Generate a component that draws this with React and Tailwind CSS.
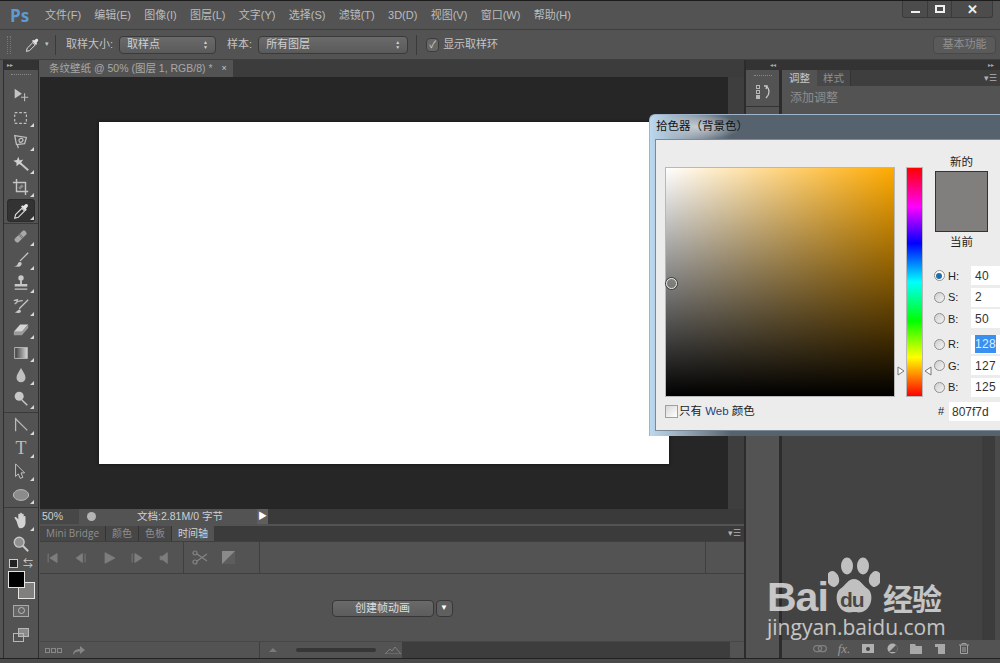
import { useState } from "react";

const cjk = "font-['Liberation_Sans','Noto_Sans_CJK_SC',sans-serif]";

const menus = ["文件(F)", "编辑(E)", "图像(I)", "图层(L)", "文字(Y)", "选择(S)", "滤镜(T)", "3D(D)", "视图(V)", "窗口(W)", "帮助(H)"];

const Svg = ({ children, size = 18 }) => (
	<svg width={size} height={size} viewBox="0 0 20 20" fill="none" stroke="none">
		{children}
	</svg>
);

const toolIcons = {
	move: (
		<>
			<path d="M3 3 L3 14 L11 8.5Z" fill="#c4c4c4" />
			<path d="M14 8v9M10 12.5h8" stroke="#bdbdbd" strokeWidth="1.2" />
		</>
	),
	marquee: <rect x="3" y="4" width="13" height="12" stroke="#c0c0c0" strokeWidth="1.3" strokeDasharray="3 2" />,
	lasso: (
		<>
			<path d="M3 4 L16 6 L14 13 L5 14Z" stroke="#c0c0c0" strokeWidth="1.4" />
			<path d="M8 8c3-2 6 0 3 3-2 1-4 0-3 -3M6 14l1 4" stroke="#c0c0c0" strokeWidth="1.4" />
		</>
	),
	wand: (
		<>
			<path d="M8 8l10 9" stroke="#c4c4c4" strokeWidth="2.2" />
			<path d="M7 2l1.5 4 4-1-2.5 3.5 2 3-4-1.5-3 2.5 0-4-3.5-2 4-1z" fill="#d0d0d0" />
		</>
	),
	crop: (
		<>
			<path d="M5 1v14h13M1 5h14v14" stroke="#c4c4c4" strokeWidth="1.6" />
			<path d="M8 12l4-4" stroke="#8a8a8a" strokeWidth="3" />
		</>
	),
	eyedropper: (
		<>
			<path d="M3 18l1-4 7-7 3 3-7 7z" stroke="#e0e0e0" strokeWidth="1.2" />
			<path d="M10 5l5 5 1.5-1.5-1-1 2-2.5c1-2-1-3.5-2.5-2.5l-2.5 2-1-1z" fill="#e4e4e4" />
		</>
	),
	heal: (
		<>
			<path d="M3 12L12 3c2-1 5 2 4 4l-9 9c-2 1-5-2-4-4z" fill="#a8a8a8" />
			<path d="M8 7l4 4" stroke="#6d6d6d" strokeWidth="3" strokeDasharray="1 1" />
		</>
	),
	brush: (
		<>
			<path d="M9 11L18 2" stroke="#c8c8c8" strokeWidth="1.4" />
			<path d="M2 17c3 0 4-1 4.500-3 .5-2 3-2.500 4-1 1 2-1 4.500-4 4.500z" fill="#c8c8c8" />
		</>
	),
	stamp: (
		<>
			<circle cx="10" cy="4.500" r="3" fill="#c8c8c8" />
			<path d="M9 7h2v4h-2z" fill="#c8c8c8" />
			<path d="M3 11h14v3H3zM3 16h14v1.500H3z" fill="#c8c8c8" />
		</>
	),
	history: (
		<>
			<path d="M3 17c3 0 3-3 6-3l1 2c-1 2-4 2-7 1z" fill="#c8c8c8" />
			<path d="M8 13L18 3" stroke="#c8c8c8" strokeWidth="1.4" />
			<path d="M3 8c2-3 6-4 9-4M2 4l4-1-1 4" stroke="#c0c0c0" strokeWidth="1.4" />
		</>
	),
	eraser: (
		<>
			<path d="M2 13L9 5h9l-7 8z" fill="#d4d4d4" />
			<path d="M2 13h9v4H2zM11 13l7-8v4l-7 8z" fill="#9b9b9b" />
		</>
	),
	gradient: (
		<>
			<defs>
				<linearGradient id="tg">
					<stop offset="0" stopColor="#3a3a3a" />
					<stop offset="1" stopColor="#d8d8d8" />
				</linearGradient>
			</defs>
			<rect x="3" y="4" width="14" height="12" fill="url(#tg)" stroke="#bdbdbd" />
		</>
	),
	drop: <path d="M10 1c2 4 5 7 5 11a5 5 0 0 1-10 0c0-4 3-7 5-11z" fill="#c0c0c0" />,
	dodge: (
		<>
			<circle cx="8" cy="7" r="5" fill="#c8c8c8" />
			<path d="M11 11l6 6" stroke="#c8c8c8" strokeWidth="1.6" />
		</>
	),
	pen: <path d="M4 2v15M4 3l13 13" stroke="#b8b8b8" strokeWidth="1.4" />,
	type: (
		<text x="10" y="17" textAnchor="middle" fontSize="20" fontFamily="Liberation Serif" fill="#bdbdbd">
			T
		</text>
	),
	select: <path d="M4 1l0 14 3-3 2 5 3-1-2-5 4 0z" fill="#4a4a4a" stroke="#c4c4c4" strokeWidth="1.1" />,
	ellipse: <ellipse cx="10" cy="10" rx="8.500" ry="6" fill="#8b8b8b" stroke="#c0c0c0" />,
	hand: (
		<path d="M5 10L3 7c-1-1 1-2 2-1l2 2V3c0-1.500 2-1.500 2 0v3-4c0-1.500 2-1.500 2 0v4-3c0-1.500 2-1.500 2 0v4-1.500c0-1.500 2-1.500 2 0V12c0 3-2 6-5 6H9c-2 0-3-5-4-8z" fill="#d2d2d2" />
	),
	zoom: (
		<>
			<circle cx="8" cy="8" r="5.500" fill="#8f8f8f" stroke="#c8c8c8" strokeWidth="1.500" />
			<path d="M12 12l6 6" stroke="#c8c8c8" strokeWidth="2.200" />
		</>
	),
};

const toolGroups = [
	["move", "marquee", "lasso", "wand", "crop", "eyedropper"],
	["heal", "brush", "stamp", "history", "eraser", "gradient", "drop", "dodge"],
	["pen", "type", "select", "ellipse"],
	["hand", "zoom"],
];

const Tool = ({ name }) => {
	const active = name === "eyedropper";
	const plain = name === "move" || name === "zoom";
	return (
		<div className={`relative flex h-[23.2px] w-[28px] items-center justify-center rounded-sm ${active ? "bg-[#333333] shadow-[inset_0_0_0_1px_#2b2b2b]" : ""}`}>
			<Svg>{toolIcons[name]}</Svg>
			{!plain && <span className="absolute bottom-[2px] right-[1px] h-0 w-0 border-b-[4px] border-l-[4px] border-b-[#d8d8d8] border-l-transparent" />}
		</div>
	);
};

const Toolbar = () => (
	<div className="flex h-full w-[36px] flex-col border-x border-[#2f2f2f] bg-[#535353]">
		<div className="flex h-[10px] items-center bg-[#333333] pl-[3px] text-[6px] leading-none text-[#b0b0b0]">▸▸</div>
		<div className="mx-auto mt-[4px] h-[2px] w-[20px] border-t border-dotted border-[#888888]" />
		<div className="flex flex-col items-center pt-[7px]">
			{toolGroups.map((group, i) => (
				<div key={i} className={`flex w-full flex-col items-center ${i > 0 ? "mt-[1px] border-t border-[#3a3a3a] pt-[1px]" : ""}`}>
					{group.map((t) => (
						<Tool key={t} name={t} />
					))}
				</div>
			))}
			<div className="mt-[3px] flex w-[28px] items-center justify-between px-[2px]">
				<div className="relative h-[9px] w-[9px] border border-[#cccccc] bg-[#222222]" />
				<span className="text-[10px] leading-none text-[#cfcfcf]">⇆</span>
			</div>
			<div className="relative mt-[2px] h-[28px] w-[27px]">
				<div className="absolute bottom-0 right-0 h-[17px] w-[17px] border border-[#e4e4e4] bg-[#807f7d]" />
				<div className="absolute left-0 top-0 h-[17px] w-[17px] border border-[#e4e4e4] bg-black" />
			</div>
			<div className="mt-[6px] flex h-[12px] w-[16px] items-center justify-center border border-[#aaaaaa] bg-[#666666]">
				<div className="h-[7px] w-[7px] rounded-full border border-[#bbbbbb]" />
			</div>
			<div className="relative mt-[11px] h-[14px] w-[16px]">
				<div className="absolute right-0 top-0 h-[9px] w-[11px] border border-[#b8b8b8] bg-[#8a8a8a]" />
				<div className="absolute bottom-0 left-0 h-[9px] w-[11px] border border-[#b8b8b8]" />
			</div>
		</div>
	</div>
);

const SelectBox = ({ label, width }) => (
	<div className={`flex h-[18px] ${width} items-center justify-between rounded-sm border border-[#3a3a3a] bg-gradient-to-b from-[#6a6a6a] to-[#5a5a5a] px-[7px] text-[11px] text-[#d0d0d0]`}>
		<span>{label}</span>
		<span className="flex flex-col text-[5px] leading-[5px] text-[#d0d0d0]">
			<span>▲</span>
			<span>▼</span>
		</span>
	</div>
);

const OptionsBar = () => (
	<div className="flex h-[31px] items-center border-y border-[#3e3e3e] bg-[#535353] pl-[7px] text-[11px] text-[#c4c4c4]">
		<div className="h-[18px] w-[4px] border-x border-dotted border-[#777777]" />
		<div className="ml-[13px]">
			<Svg size={16}>{toolIcons.eyedropper}</Svg>
		</div>
		<span className="ml-[5px] text-[7px]">▾</span>
		<div className="ml-[6px] mr-[10px] h-[20px] w-px bg-[#3a3a3a]" />
		<span className="mr-[6px]">取样大小:</span>
		<SelectBox label="取样点" width="w-[97px]" />
		<span className="ml-[11px] mr-[6px]">样本:</span>
		<SelectBox label="所有图层" width="w-[150px]" />
		<div className="ml-[8px] mr-[9px] h-[20px] w-px bg-[#3a3a3a]" />
		<div className="flex h-[14px] w-[13px] items-center justify-center rounded-sm border border-[#3c3c3c] bg-[#666666] text-[10px] leading-none text-[#d4d4d4]">✓</div>
		<span className="ml-[4px]">显示取样环</span>
		<div className="ml-auto mr-[4px] flex h-[18px] w-[63px] items-center justify-center rounded-sm border border-[#484848] bg-[#5a5a5a] text-[#909090]">基本功能</div>
	</div>
);

const TitleBar = () => (
	<div className="relative flex h-[29px] items-center border-t border-[#1c1c1c] bg-[#535353] pl-[10px] text-[11px] text-[#bcbcbc]">
		<span className="mr-[15px] w-[20px] font-['Open_Sans',sans-serif] text-[17px] font-bold leading-none text-[#5f9ad2]">Ps</span>
		<div className="flex gap-[13.3px]">
			{menus.map((m) => (
				<span key={m}>{m}</span>
			))}
		</div>
		<div className="absolute right-[7px] top-0 flex h-[17px] w-[91px] rounded-b-[3px] border border-t-0 border-[#3a3a3a] bg-[#4c4c4c] text-[#eeeeee]">
			<div className="flex w-[25px] items-end justify-center border-r border-[#3a3a3a] pb-[4px]">
				<div className="h-[2px] w-[9px] bg-[#f0f0f0]" />
			</div>
			<div className="flex w-[24px] items-center justify-center border-r border-[#3a3a3a]">
				<div className="h-[8px] w-[10px] border-2 border-[#f0f0f0]" />
			</div>
			<div className="flex flex-1 items-center justify-center text-[13px] font-bold leading-none">✕</div>
		</div>
	</div>
);

const Canvas = () => (
	<div className="flex min-h-0 flex-1 flex-col">
		<div className="flex h-[17px] bg-[#3c3c3c]">
			<div className="flex w-[193px] items-center bg-[#535353] pl-[9px] text-[10.500px] leading-none text-[#a8a8a8]">
				<span>条纹壁纸 @ 50% (图层 1, RGB/8) *</span>
				<span className="ml-[9px] text-[9px] text-[#c8c8c8]">×</span>
			</div>
		</div>
		<div className="flex min-h-0 flex-1">
			<div className="flex-1 bg-[#262626] pl-[59px] pt-[45px]">
				<div className="h-[342px] w-[570px] bg-white shadow-[0_0_3px_#111]" />
			</div>
			<div className="w-[16px] bg-[#3e3e3e]" />
		</div>
		<div className="flex h-[15px] items-center bg-[#3a3a3a] text-[10.500px] text-[#d0d0d0]">
			<div className="flex h-full w-[39px] items-center bg-[#474747] pl-[2px]">50%</div>
			<div className="flex h-full w-[24px] items-center justify-center bg-[#535353]">
				<div className="h-[9px] w-[9px] rounded-full bg-[#b4b4b4]" />
			</div>
			<div className="flex h-full w-[154px] items-center justify-center bg-[#535353]">文档:2.81M/0 字节</div>
			<div className="flex h-full w-[11px] items-center justify-center bg-[#5e5e5e] text-[9px] text-white">▶</div>
		</div>
	</div>
);

const timelineButtons = [
	"M3 4v10M13 4L5 9l8 5z",
	"M10 4L3 9l7 5zM13 4v10",
	"M4 3l11 6-11 6z",
	"M3 4v10M6 4l8 5-8 5z",
	"M3 7h3l5-4v12l-5-4H3z",
];

const Timeline = () => (
	<div className="mt-[2px] flex h-[132px] flex-col bg-[#535353]">
		<div className="flex h-[15px] justify-between bg-[#3b3b3b] text-[10px] leading-[15px] text-[#8f8f8f]">
			<div className="flex">
				<div className="border-r border-[#333333] bg-[#474747] px-[6px] font-['Open_Sans',sans-serif]">Mini Bridge</div>
				<div className="border-r border-[#333333] bg-[#474747] px-[6px]">颜色</div>
				<div className="border-r border-[#333333] bg-[#474747] px-[6px]">色板</div>
				<div className="bg-[#535353] px-[6px] text-[#d4d4d4]">时间轴</div>
			</div>
			<span className="pr-[3px] text-[9px] text-[#b0b0b0]">▾☰</span>
		</div>
		<div className="flex h-[33px] border-y border-[#3f3f3f]">
			<div className="flex w-[144px] items-center border-r border-[#3f3f3f] pl-[5px]">
				<div className="flex gap-[11px]">
					{timelineButtons.map((d) => (
						<svg key={d} width="17" height="16" viewBox="0 0 18 18">
							<path d={d} fill="#7d7d7d" stroke="#7d7d7d" strokeWidth="1" />
						</svg>
					))}
				</div>
			</div>
			<div className="flex w-[76px] items-center gap-[14px] border-r border-[#3f3f3f] pl-[8px]">
				<svg width="16" height="15" viewBox="0 0 16 15" fill="none" stroke="#858585" strokeWidth="1.2">
					<circle cx="3" cy="3" r="2" />
					<circle cx="3" cy="12" r="2" />
					<path d="M5 4l10 7M5 11l10-7" />
				</svg>
				<svg width="13" height="13" viewBox="0 0 13 13">
					<rect width="13" height="13" fill="#8a8a8a" />
					<path d="M0 13L13 0v13z" fill="#5d5d5d" />
				</svg>
			</div>
			<div className="flex-1" />
			<div className="w-[39px] border-l border-[#3f3f3f]" />
		</div>
		<div className="flex flex-1 items-center justify-center pt-[1px]">
			<div className="flex h-[17px] w-[102px] items-center justify-center rounded-sm border border-[#383838] bg-gradient-to-b from-[#6a6a6a] to-[#5c5c5c] text-[11px] text-[#dddddd]">创建帧动画</div>
			<div className="ml-[2px] flex h-[17px] w-[17px] items-center justify-center rounded-sm border border-[#383838] bg-[#5f5f5f] text-[8px] text-white">▼</div>
		</div>
		<div className="flex h-[17px] border-t border-[#474747]">
			<div className="flex w-[220px] items-center gap-[11px] border-r border-[#3f3f3f] pl-[5px]">
				<div className="flex gap-px">
					<span className="h-[5px] w-[5px] border border-[#888888]" />
					<span className="h-[5px] w-[5px] border border-[#888888]" />
					<span className="h-[5px] w-[5px] border border-[#888888]" />
				</div>
				<svg width="12" height="10" viewBox="0 0 12 10">
					<path d="M0 10c0-4 3-6 7-6V1l5 4-5 4V6.500C4 6 2 7 0 10z" fill="#858585" />
				</svg>
			</div>
			<div className="flex w-[142px] items-center pl-[9px]">
				<span className="border-x-[4px] border-b-[4px] border-x-transparent border-b-[#7a7a7a]" />
				<div className="ml-[19px] h-[4px] w-[80px] rounded-full bg-[#363636]" />
				<svg className="ml-[9px]" width="16" height="8" viewBox="0 0 16 8">
					<path d="M0 8l5-5 2 2 3-4 6 7z" fill="none" stroke="#808080" />
				</svg>
			</div>
			<div className="flex-1 bg-[#3d3d3d]" />
			<div className="w-[14px]" />
		</div>
	</div>
);

const layerIcons = [
	<svg width="14" height="8" viewBox="0 0 14 8" fill="none" stroke="#808080" strokeWidth="1.200">
		<rect x=".6" y=".6" width="8" height="6" rx="3" />
		<rect x="5.400" y=".6" width="8" height="6" rx="3" />
	</svg>,
	<span className="font-['Liberation_Serif',serif] text-[13px] italic leading-none">fx.</span>,
	<div className="flex h-[9px] w-[12px] items-center justify-center bg-[#b0b0b0]">
		<div className="h-[4px] w-[4px] rounded-full bg-[#444444]" />
	</div>,
	<svg width="11" height="11" viewBox="0 0 11 11">
		<circle cx="5.500" cy="5.500" r="5" fill="#b0b0b0" />
		<path d="M2 9L9 2A5 5 0 0 1 9 9z" fill="#555555" />
	</svg>,
	<svg width="12" height="10" viewBox="0 0 12 10">
		<path d="M0 0h5l1 2h6v8H0z" fill="#a8a8a8" />
	</svg>,
	<svg width="10" height="10" viewBox="0 0 10 10">
		<path d="M0 0h10v10H3V3H0z" fill="#a8a8a8" />
	</svg>,
	<svg width="10" height="11" viewBox="0 0 10 11" fill="none" stroke="#a0a0a0">
		<path d="M0 2h10M3 2V.5h4V2M1.500 2v8.500h7V2M4 4v5M6 4v5" />
	</svg>,
];

const RightPanels = () => (
	<div className="flex h-full w-[254px] flex-col">
		<div className="flex h-[10px] items-center justify-between bg-[#333333] pl-[24px] pr-[6px] text-[6px] leading-none text-[#a8a8a8]">
			<span>◂◂</span>
			<span>▸▸</span>
		</div>
		<div className="flex min-h-0 flex-1">
			<div className="flex w-[33px] flex-col bg-[#535353]">
				<div className="mx-auto mt-[5px] h-[2px] w-[18px] border-t border-dotted border-[#888888]" />
				<div className="flex h-[30px] items-center justify-center gap-[3px] border-b border-[#333333] text-[#c8c8c8]">
					<div className="flex flex-col gap-[1px]">
						<span className="h-[4px] w-[4px] border border-[#b8b8b8]" />
						<span className="h-[4px] w-[4px] border border-[#b8b8b8]" />
						<span className="h-[4px] w-[4px] bg-[#b8b8b8]" />
					</div>
					<svg width="7" height="14" viewBox="0 0 7 14" fill="none" stroke="#c8c8c8" strokeWidth="1.300">
						<path d="M1 1h3l-1 3M3 1c4 3 4 8 0 12" />
					</svg>
				</div>
			</div>
			<div className="w-[3px] bg-[#2c2c2c]" />
			<div className="flex min-w-0 flex-1 flex-col bg-[#535353]">
				<div className="flex h-[16px] justify-between bg-[#3e3e3e] text-[10.500px] leading-[16px]">
					<div className="flex">
						<div className="bg-[#535353] px-[7px] text-[#c8c8c8]">调整</div>
						<div className="border-r border-[#333333] bg-[#474747] px-[6px] text-[#8f8f8f]">样式</div>
					</div>
					<span className="pr-[3px] text-[9px] text-[#b0b0b0]">▾☰</span>
				</div>
				<div className="h-[28px] pl-[8px] pt-[3px] text-[12px] text-[#8d8d8d]">添加调整</div>
				<div className="flex min-h-0 flex-1">
					<div className="w-[200px] bg-[#434343]" />
					<div className="w-[13px] bg-[#3c3c3c]" />
					<div className="flex-1 bg-[#4a4a4a]" />
				</div>
				<div className="flex h-[17px] w-[213px] items-center justify-end bg-[#535353] pr-[19px] text-[#999999]">
					{layerIcons.map((icon, i) => (
						<div key={i} className="flex w-[24px] justify-center">
							{icon}
						</div>
					))}
				</div>
				<div className="h-[1px]" />
			</div>
		</div>
	</div>
);

const radios = [
	{ label: "H:", value: "40", on: true, gap: "mt-0" },
	{ label: "S:", value: "2", gap: "mt-[2px]" },
	{ label: "B:", value: "50", gap: "mt-[2px]" },
	{ label: "R:", value: "128", selected: true, gap: "mt-[6px]" },
	{ label: "G:", value: "127", gap: "mt-[2px]" },
	{ label: "B:", value: "125", gap: "mt-[2px]" },
];

const ColorPicker = () => {
	const [hex] = useState("807f7d");
	return (
		<div className={`absolute left-[649px] top-[114px] flex h-[322px] w-[370px] flex-col rounded-tl-md border-l border-t border-[#9fb4c8] bg-[radial-gradient(ellipse_46px_13px_at_46px_12px,#c4ccd3,transparent),linear-gradient(to_right,#bcd9f0,#8b99a6_12%,#56636f_22%)] pl-[5px] text-[11px] text-[#222222] ${cjk}`}>
			<div className="flex h-[24px] items-center pl-[1px] text-[11.500px] text-[#111111]">拾色器（背景色）</div>
			<div className="flex h-[292px] border border-[#7d8a96] bg-[#ececec] pl-[9px] pt-[27px]">
				<div className="w-[230px]">
					<div className="relative h-[230px] w-[230px] border border-[#b8b8b8] bg-[linear-gradient(to_top,#000000,transparent),linear-gradient(to_right,#ffffff,#ffaa00)]">
						<div className="absolute left-0 top-[110px] h-[11px] w-[11px] rounded-full border border-[#e8e8e8] shadow-[0_0_0_1px_#444]" />
					</div>
					<div className="mt-[7px] flex items-center">
						<div className="h-[13px] w-[13px] border border-[#a0a0a0] bg-gradient-to-br from-[#d8d8d8] to-white" />
						<span className="ml-[1px] text-[11.500px] leading-[14px]">只有 <span className="text-[#1f3f7f]">Web</span> 颜色</span>
					</div>
				</div>
				<div className="relative ml-[11px] h-[230px] w-[20px] border border-[#b8b8b8] bg-[linear-gradient(to_bottom,#ff0000,#ff00ff_17%,#0000ff_33%,#00ffff_50%,#00ff00_67%,#ffff00_83%,#ff0000)]">
					<svg className="absolute left-[-10px] top-[198px]" width="8" height="10" viewBox="0 0 8 10">
						<path d="M1 1l6 4-6 4z" fill="#ffffff" stroke="#777777" />
					</svg>
					<svg className="absolute right-[-10px] top-[198px]" width="8" height="10" viewBox="0 0 8 10">
						<path d="M7 1L1 5l6 4z" fill="#ffffff" stroke="#777777" />
					</svg>
				</div>
				<div className="ml-[12px] w-[100px]">
					<div className="mt-[-11px] w-[53px] text-center text-[11.500px] leading-[12px]">新的</div>
					<div className="mt-[3px] h-[61px] w-[53px] border border-[#333333] bg-[#807f7d]" />
					<div className="mt-[4px] w-[53px] text-center text-[11.500px] leading-[12px]">当前</div>
					<div className="-ml-[1px] mt-[18px] flex flex-col">
						{radios.map((r) => (
							<div key={r.value} className={`flex h-[19.500px] items-center ${r.gap}`}>
								<div className={`flex h-[11px] w-[11px] items-center justify-center rounded-full border border-[#8f8f8f] ${r.on ? "bg-white" : "bg-gradient-to-br from-[#cfcfcf] to-[#f4f4f4]"}`}>
									{r.on && <div className="h-[6px] w-[6px] rounded-full bg-[#1d6fa5]" />}
								</div>
								<span className="ml-[3px] w-[23px] font-['Liberation_Sans',sans-serif] font-medium">{r.label}</span>
								<div className="flex h-[19px] flex-1 items-center bg-white pl-[4px] font-['Liberation_Sans',sans-serif] text-[12px] tracking-[0.3px] text-[#333333]">
									<span className={r.selected ? "bg-[#3a90f0] text-[#dfefff]" : ""}>{r.value}</span>
								</div>
							</div>
						))}
					</div>
					<div className="mt-[5px] flex h-[19px] items-center">
						<span className="w-[14px] pl-[3px] font-['Liberation_Sans',sans-serif]">#</span>
						<div className="flex h-[19px] flex-1 items-center bg-white pl-[3px] font-['Liberation_Sans',sans-serif] text-[12px] text-[#333333]">{hex}</div>
					</div>
				</div>
			</div>
		</div>
	);
};

const Watermark = () => (
	<div className="pointer-events-none absolute left-[767px] top-[556px] h-[88px] w-[180px] text-[#e6e6e6] opacity-80">
		<div className="absolute left-0 top-[23px] font-['Liberation_Sans',sans-serif] text-[41px] font-bold leading-[36px] tracking-[-1px]">Bai</div>
		<svg className="absolute left-[61px] top-[1px]" width="52" height="58" viewBox="0 0 52 58" fill="#e0e0e0">
			<ellipse cx="5" cy="22" rx="6" ry="8" transform="rotate(-15 5 22)" />
			<ellipse cx="19" cy="9" rx="6" ry="8.500" />
			<ellipse cx="35" cy="9" rx="6" ry="8.500" />
			<ellipse cx="47" cy="22" rx="6" ry="8" transform="rotate(15 47 22)" />
			<path d="M26 22c6 0 8 6 14 10 6 5 4 20-6 23-4 1-6 0-8 0s-4 1-8 0c-10-3-12-18-6-23 6-4 8-10 14-10z" />
		</svg>
		<div className="absolute left-[73px] top-[33px] font-['Liberation_Sans',sans-serif] text-[21px] font-bold leading-none tracking-[-1px] text-[#4a4a4a]">du</div>
		<div className="absolute left-[116px] top-[26px] font-['Noto_Sans_CJK_SC',sans-serif] text-[30px] font-bold leading-[30px] tracking-[-1px]">经验</div>
		<div className="absolute left-0 top-[61px] whitespace-nowrap font-['Open_Sans',sans-serif] text-[21px] leading-[20px]">jingyan.baidu.com</div>
	</div>
);

const App = () => (
	<div className={`relative flex h-[663px] w-[1000px] flex-col overflow-hidden bg-[#535353] ${cjk}`}>
		<TitleBar />
		<OptionsBar />
		<div className="flex h-[598px] pl-[3px]">
			<Toolbar />
			<div className="flex h-full w-[705px] flex-col pl-px">
				<Canvas />
				<Timeline />
			</div>
			<div className="w-[2px] bg-[#2c2c2c]" />
			<RightPanels />
		</div>
		<div className="h-[5px] border-t border-[#222222] bg-[#4a4a4a]" />
		<ColorPicker />
		<Watermark />
	</div>
);

export default App;
